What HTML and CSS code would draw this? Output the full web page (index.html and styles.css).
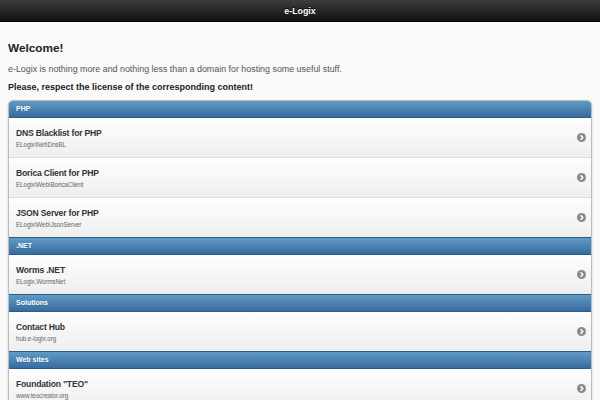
FILE: index.html
```html
<!DOCTYPE html>
<html>
<head>
<meta charset="utf-8">
<title>e-Logix</title>
<link rel="stylesheet" href="styles.css">
</head>
<body>
<header class="bar"><h1 class="bar-title">e-Logix</h1></header>
<main class="content">
  <h2 class="welcome">Welcome!</h2>
  <p class="intro">e-Logix is nothing more and nothing less than a domain for hosting some useful stuff.</p>
  <p class="notice">Please, respect the license of the corresponding content!</p>
  <ul class="list">
    <li class="divider">PHP</li>
    <li class="item"><a class="link" href="#"><span class="text"><span class="title">DNS Blacklist for PHP</span><span class="sub">ELogix\Net\DnsBL</span></span><span class="arrow"><svg viewBox="0 0 10 10" width="9" height="9"><circle cx="5" cy="5" r="5" fill="#8a8a8a"/><path d="M4 2.6 L6.4 5 L4 7.4" fill="none" stroke="#fff" stroke-width="1.6"/></svg></span></a></li>
    <li class="item"><a class="link" href="#"><span class="text"><span class="title">Borica Client for PHP</span><span class="sub">ELogix\Web\BoricaClient</span></span><span class="arrow"><svg viewBox="0 0 10 10" width="9" height="9"><circle cx="5" cy="5" r="5" fill="#8a8a8a"/><path d="M4 2.6 L6.4 5 L4 7.4" fill="none" stroke="#fff" stroke-width="1.6"/></svg></span></a></li>
    <li class="item"><a class="link" href="#"><span class="text"><span class="title">JSON Server for PHP</span><span class="sub">ELogix\Web\JsonServer</span></span><span class="arrow"><svg viewBox="0 0 10 10" width="9" height="9"><circle cx="5" cy="5" r="5" fill="#8a8a8a"/><path d="M4 2.6 L6.4 5 L4 7.4" fill="none" stroke="#fff" stroke-width="1.6"/></svg></span></a></li>
    <li class="divider">.NET</li>
    <li class="item"><a class="link" href="#"><span class="text"><span class="title">Worms .NET</span><span class="sub">ELogix.WormsNet</span></span><span class="arrow"><svg viewBox="0 0 10 10" width="9" height="9"><circle cx="5" cy="5" r="5" fill="#8a8a8a"/><path d="M4 2.6 L6.4 5 L4 7.4" fill="none" stroke="#fff" stroke-width="1.6"/></svg></span></a></li>
    <li class="divider">Solutions</li>
    <li class="item"><a class="link" href="#"><span class="text"><span class="title">Contact Hub</span><span class="sub">hub.e-logix.org</span></span><span class="arrow"><svg viewBox="0 0 10 10" width="9" height="9"><circle cx="5" cy="5" r="5" fill="#8a8a8a"/><path d="M4 2.6 L6.4 5 L4 7.4" fill="none" stroke="#fff" stroke-width="1.6"/></svg></span></a></li>
    <li class="divider">Web sites</li>
    <li class="item"><a class="link" href="#"><span class="text"><span class="title">Foundation "TEO"</span><span class="sub">www.teocreator.org</span></span><span class="arrow"><svg viewBox="0 0 10 10" width="9" height="9"><circle cx="5" cy="5" r="5" fill="#8a8a8a"/><path d="M4 2.6 L6.4 5 L4 7.4" fill="none" stroke="#fff" stroke-width="1.6"/></svg></span></a></li>
  </ul>
</main>
</body>
</html>
```
FILE: styles.css
```css
html, body {
  margin: 0;
  padding: 0;
}
body {
  background: #f9f9f9;
  font-family: "Liberation Sans", Arial, sans-serif;
  color: #222;
}
.bar {
  height: 21px;
  background: linear-gradient(#3c3c3c, #111);
  border-bottom: 1px solid #000;
  display: flex;
  align-items: center;
  justify-content: center;
}
.bar-title {
  margin: 0;
  font-size: 8.8px;
  font-weight: bold;
  color: #fff;
  text-shadow: 0 -1px 0 #000;
}
.content {
  padding: 16px 8px 0;
}
.welcome {
  margin: 0;
  font-size: 11.8px;
  line-height: 20px;
  font-weight: bold;
  color: #222;
}
.intro {
  margin: 4px 0 0;
  font-size: 8.9px;
  line-height: 14px;
  color: #555;
}
.notice {
  margin: 4px 0 0;
  font-size: 9px;
  line-height: 14px;
  font-weight: bold;
  color: #222;
}
.list {
  list-style: none;
  margin: 6px 0 0;
  padding: 0;
  border: 1px solid #bbb;
  border-radius: 5px;
  overflow: hidden;
  box-shadow: 0 1px 3px rgba(0,0,0,0.15);
}
.divider {
  height: 16px;
  line-height: 16px;
  padding: 0 7px;
  font-size: 7px;
  font-weight: bold;
  color: #fff;
  text-shadow: 0 1px 0 #3373a5;
  background: linear-gradient(#5f9cc5, #396b9e);
  border-top: 1px solid #2a5d8c;
}
.divider:first-child {
  border-top: none;
}
.item {
  border-top: 1px solid #ddd;
  background: linear-gradient(#fefefe, #eeeeee);
}
.divider + .item {
  border-top: 1px solid #2a5d8c;
}
.link {
  height: 39px;
  display: flex;
  align-items: center;
  justify-content: space-between;
  padding: 0 5px 0 7px;
  text-decoration: none;
  color: #222;
}
.text {
  display: flex;
  flex-direction: column;
}
.title {
  font-size: 8.6px;
  letter-spacing: -0.2px;
  font-weight: bold;
  line-height: 12px;
  color: #333;
}
.sub {
  margin-top: 1px;
  font-size: 6.3px;
  letter-spacing: -0.1px;
  line-height: 9px;
  color: #666;
}
.arrow {
  display: flex;
  width: 9px;
  height: 9px;
}
```
